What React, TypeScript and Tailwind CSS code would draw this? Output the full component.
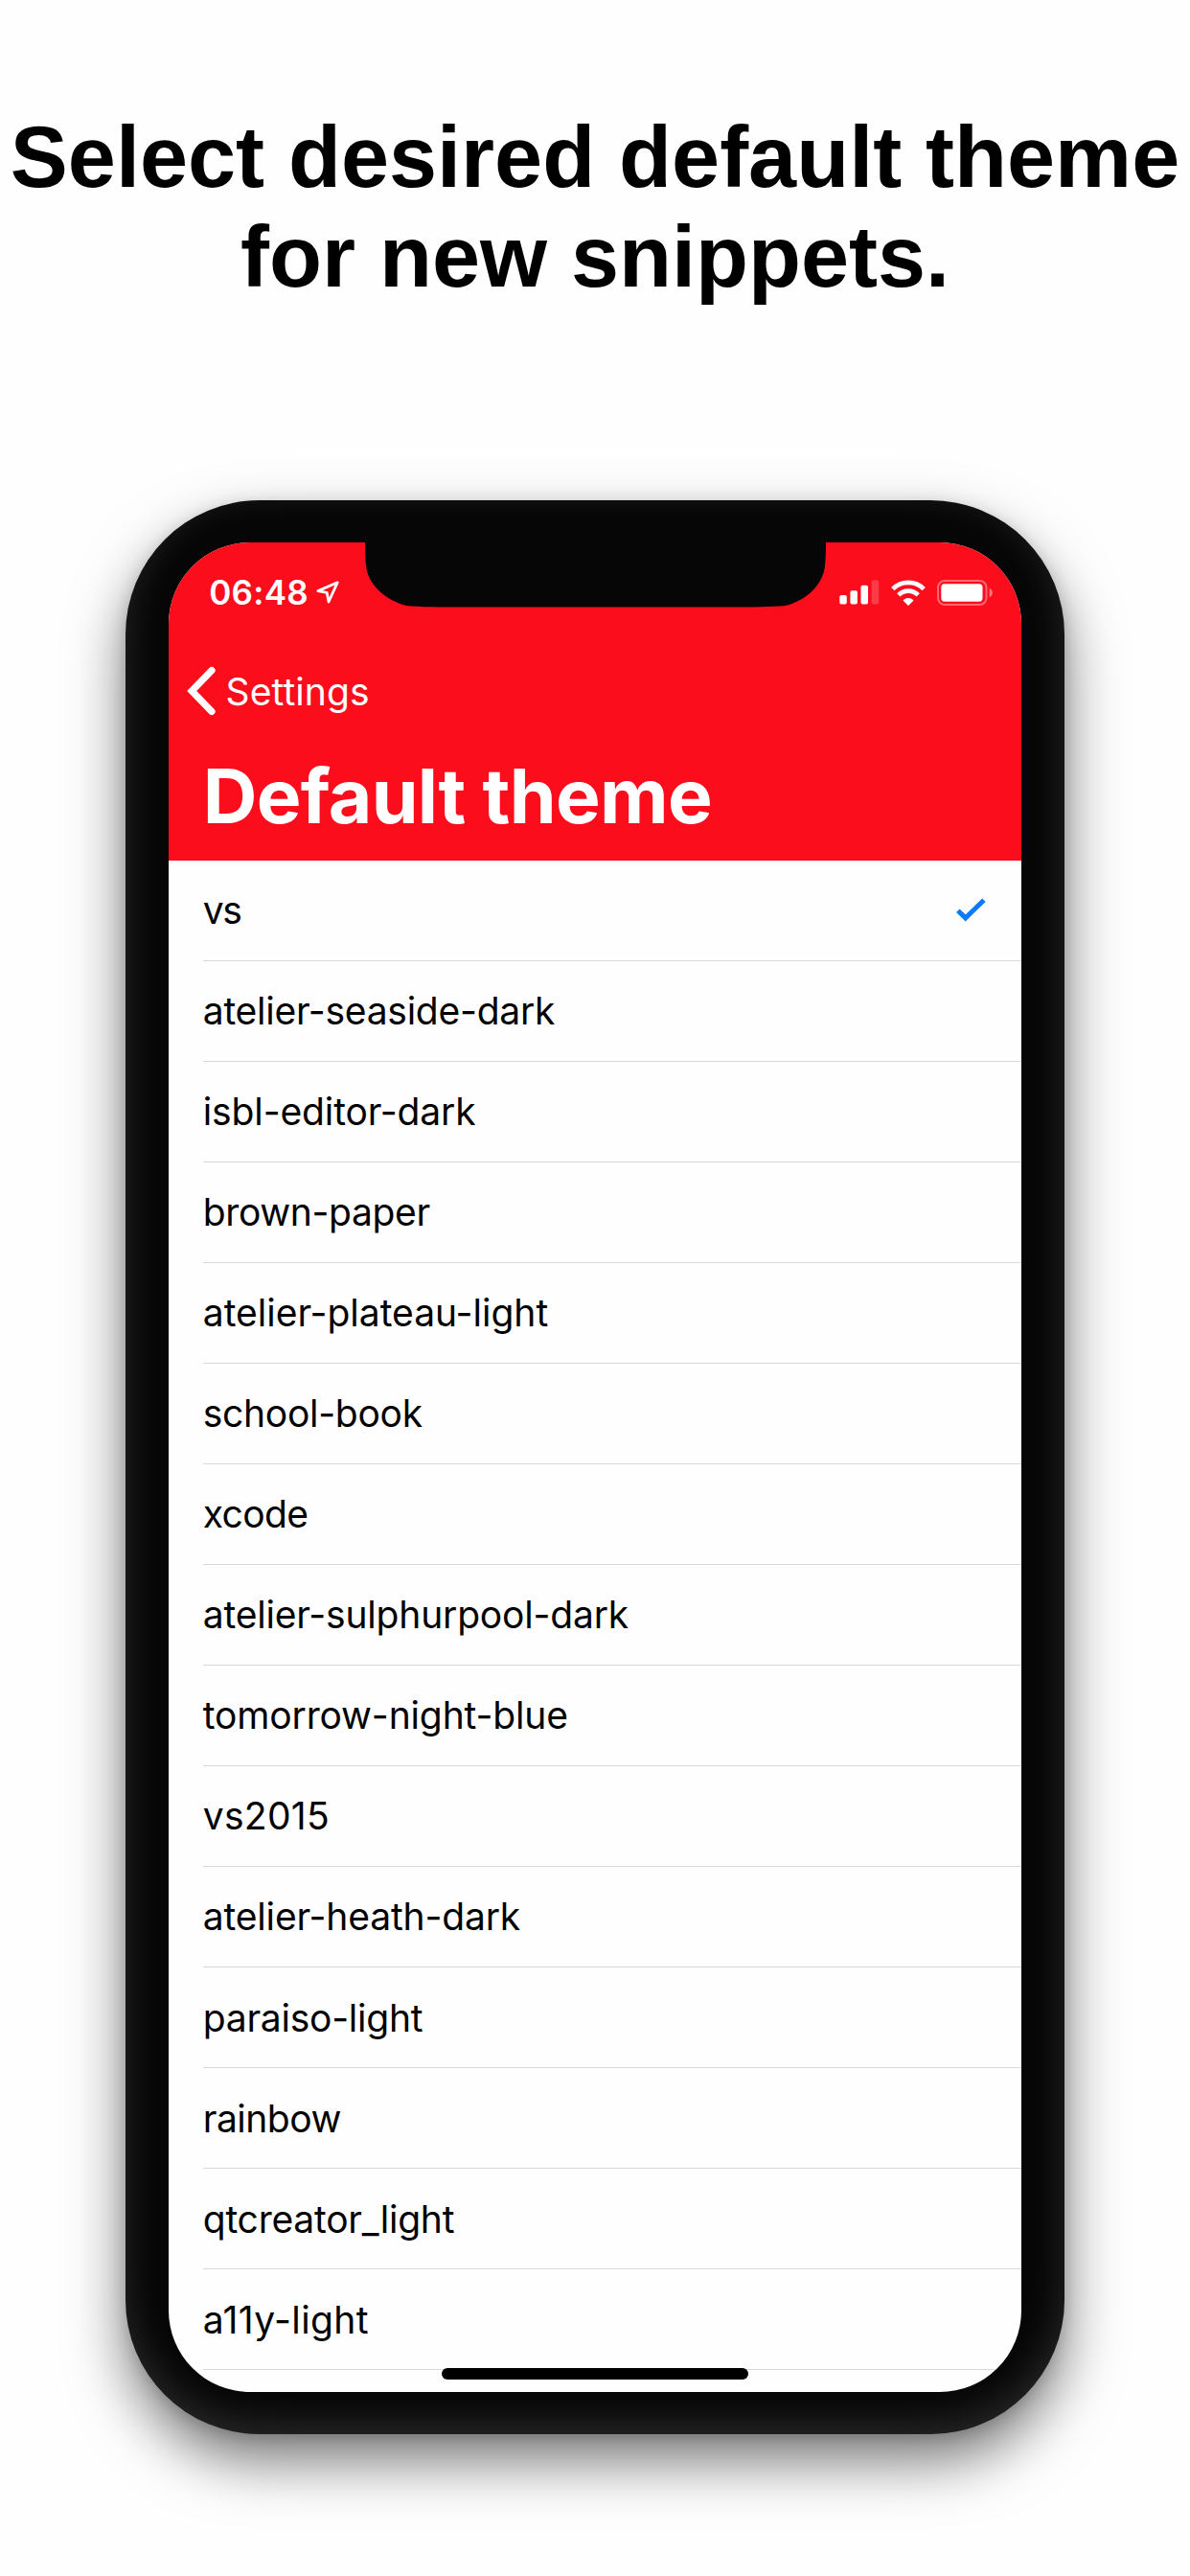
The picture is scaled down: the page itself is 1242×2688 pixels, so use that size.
type Theme = { name: string; tracking: string; selected?: boolean };

const themes: Theme[] = [
  { name: "vs", tracking: "tracking-[-1.5px]", selected: true },
  { name: "atelier-seaside-dark", tracking: "tracking-[-0.25px]" },
  { name: "isbl-editor-dark", tracking: "tracking-[-0.12px]" },
  { name: "brown-paper", tracking: "tracking-[-0.36px]" },
  { name: "atelier-plateau-light", tracking: "tracking-[0px]" },
  { name: "school-book", tracking: "tracking-[-0.28px]" },
  { name: "xcode", tracking: "tracking-[-0.6px]" },
  { name: "atelier-sulphurpool-dark", tracking: "tracking-[-0.18px]" },
  { name: "tomorrow-night-blue", tracking: "tracking-[-0.14px]" },
  { name: "vs2015", tracking: "tracking-[0.3px]" },
  { name: "atelier-heath-dark", tracking: "tracking-[-0.15px]" },
  { name: "paraiso-light", tracking: "tracking-[-0.25px]" },
  { name: "rainbow", tracking: "tracking-[-0.5px]" },
  { name: "qtcreator_light", tracking: "tracking-[-0.22px]" },
  { name: "a11y-light", tracking: "tracking-[0.4px]" },
];

function Notch() {
  return (
    <svg
      className="absolute top-[-1px] left-[205.5px] h-[68.5px] w-[481px]"
      viewBox="0 0 481 69"
      preserveAspectRatio="none"
      fill="#060606"
      aria-hidden="true"
    >
      <path d="M0 0H481C481 14 480.5 22 479.5 29C476 46 462 61 439 67.5C425 69 400 69 380 69H101C80 69 56 69 43 67.5C20 61 5 46 1.5 29C0.5 22 0 14 0 0Z" />
    </svg>
  );
}

function LocationArrow() {
  return (
    <svg className="h-6 w-6" viewBox="0 0 24 24" fill="none" aria-hidden="true">
      <path
        d="M22.2 1.8L2 10.6L11.2 12.4L13 22Z"
        stroke="#fff"
        strokeWidth="2.8"
        strokeLinejoin="round"
      />
    </svg>
  );
}

function SignalBars() {
  return (
    <svg className="h-[26px] w-[42px]" viewBox="0 0 42 26" fill="#fff" aria-hidden="true">
      <rect x="0.3" y="16" width="7.5" height="9.5" rx="1.8" />
      <rect x="11.4" y="11.2" width="7.5" height="14.3" rx="1.8" />
      <rect x="22.5" y="5.8" width="7.5" height="19.7" rx="1.8" />
      <rect x="33.7" y="0.5" width="7.5" height="25" rx="1.8" opacity="0.2" />
    </svg>
  );
}

function WifiIcon() {
  return (
    <svg className="h-[27px] w-[36px]" viewBox="0 0 36 27" aria-hidden="true">
      <g fill="none" stroke="#fff" strokeWidth="4.8">
        <path d="M1.8 9.6A23 23 0 0 1 34.2 9.6" />
        <path d="M7.8 15.9A14.4 14.4 0 0 1 28.2 15.9" />
      </g>
      <path
        d="M12.9 21.1A7.3 7.3 0 0 1 23.1 21.1Q23.6 21.6 23.1 22.1L18.6 26.4Q18 27 17.4 26.4L12.9 22.1Q12.4 21.6 12.9 21.1Z"
        fill="#fff"
      />
    </svg>
  );
}

function BatteryIcon() {
  return (
    <svg className="h-[27px] w-[58px]" viewBox="0 0 58 27" aria-hidden="true">
      <rect x="1" y="1" width="50.5" height="25" rx="7" fill="none" stroke="#fff" strokeOpacity="0.38" strokeWidth="2" />
      <rect x="4.3" y="4.3" width="43.2" height="18.4" rx="3.6" fill="#fff" />
      <path d="M54.7 8.8Q57.8 10.4 57.8 13.5T54.7 18.2Z" fill="#fff" fillOpacity="0.45" />
    </svg>
  );
}

function BackChevron() {
  return (
    <svg className="h-[52px] w-[30px]" viewBox="0 0 30 52" fill="none" aria-hidden="true">
      <path d="M26 4.5L5.2 26L26 47.5" stroke="#fff" strokeWidth="7.2" strokeLinecap="round" />
    </svg>
  );
}

function CheckMark() {
  return (
    <svg className="h-[26px] w-[31px]" viewBox="0 0 31 26" fill="none" aria-hidden="true">
      <path d="M1.8 13.2L9.7 20.9L28.9 2.2" stroke="#0a7aff" strokeWidth="5" />
    </svg>
  );
}

function Header() {
  return (
    <header className="h-[331.5px] bg-[#fc0d1b] text-white">
      <div className="flex h-[104px] items-center justify-between pr-[30.5px] pl-[42.5px]">
        <div className="flex items-center gap-[8px]">
          <span className="text-[35px] leading-none font-semibold tracking-[0.25px]">06:48</span>
          <LocationArrow />
        </div>
        <div className="flex items-center gap-[12px]">
          <SignalBars />
          <WifiIcon />
          <BatteryIcon />
        </div>
      </div>
      <div className="flex h-[102px] items-center gap-[10.5px] pl-[19.3px]">
        <BackChevron />
        <span className="text-[39px] leading-none tracking-[0.1px]">Settings</span>
      </div>
      <h2 className="flex h-[118px] items-center pl-9 text-[78.5px] leading-none font-bold tracking-[-0.7px]">
        Default theme
      </h2>
    </header>
  );
}

function ThemeRow({ theme }: { theme: Theme }) {
  return (
    <li className="ml-9 flex h-[105.05px] items-center justify-between border-b border-[#d8d8da] pr-[37px]">
      <span className={`text-[39px] leading-none ${theme.tracking}`}>{theme.name}</span>
      {theme.selected && <CheckMark />}
    </li>
  );
}

export default function App() {
  return (
    <main className="flex h-[2688px] w-[1242px] flex-col items-center overflow-hidden bg-[#fefefe] pt-[113px] text-black">
      <h1 className="h-[409px] shrink-0 text-center font-['Liberation_Sans'] text-[90px] leading-[103.5px] font-bold whitespace-nowrap">
        Select desired default theme
        <br />
        for new snippets.
      </h1>
      <div className="h-[2018px] w-[979.5px] shrink-0 rounded-[140px] bg-[#060606] p-[44.5px] pt-11 font-['Inter'] shadow-[0_28px_60px_rgba(0,0,0,0.53),0_4px_16px_rgba(0,0,0,0.14),inset_0_-12px_40px_rgba(255,255,255,0.14)]">
        <div className="relative h-[1930px] overflow-hidden rounded-[85px] bg-[#fefefe]">
          <Header />
          <ul>
            {themes.map((theme) => (
              <ThemeRow key={theme.name} theme={theme} />
            ))}
          </ul>
          <Notch />
          <div className="absolute bottom-[13px] left-1/2 h-3 w-80 -translate-x-1/2 rounded-full bg-black" />
        </div>
      </div>
    </main>
  );
}
